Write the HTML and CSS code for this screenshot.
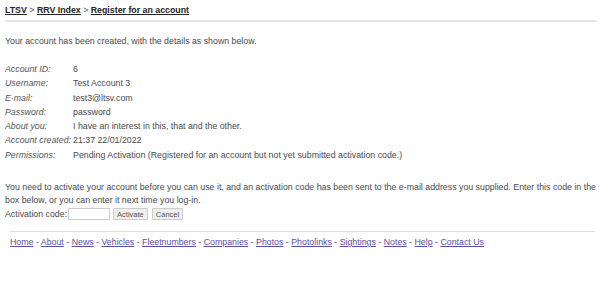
FILE: index.html
```html
<html>
<head>
    <title>Register for an account</title>
    <link rel="stylesheet" href="styles.css">
</head>
<body>
    <div class="header">
        <a href="#">LTSV</a> &gt; <a href="#">RRV Index</a> &gt; <a href="#">Register for an account</a>
    </div>

    <div class="content">
        <p>Your account has been created, with the details as shown below.</p>

        <table class="details">
            <tr><th>Account ID:</th><td>6</td></tr>
            <tr><th>Username:</th><td>Test Account 3</td></tr>
            <tr><th>E-mail:</th><td>test3@ltsv.com</td></tr>
            <tr><th>Password:</th><td>password</td></tr>
            <tr><th>About you:</th><td>I have an interest in this, that and the other.</td></tr>
            <tr><th>Account created:</th><td>21:37 22/01/2022</td></tr>
            <tr><th>Permissions:</th><td>Pending Activation (Registered for an account but not yet submitted activation code.)</td></tr>
        </table>

        <p class="notice">You need to activate your account before you can use it, and an activation code has been sent to the e-mail address you supplied. Enter this code in the box below, or you can enter it next time you log-in.</p>
        <form class="activate">
            <label for="code">Activation code:</label>
            <input type="text" id="code">
            <button type="submit">Activate</button>
            <button type="button">Cancel</button>
        </form>
    </div>

    <div class="footer">
        <a href="#">Home</a> - <a href="#">About</a> - <a href="#">News</a> - <a href="#">Vehicles</a> - <a href="#">Fleetnumbers</a> - <a href="#">Companies</a> - <a href="#">Photos</a> - <a href="#">Photolinks</a> - <a href="#">Sightings</a> - <a href="#">Notes</a> - <a href="#">Help</a> - <a href="#">Contact Us</a>
    </div>
</body>
</html>
```

FILE: styles.css
```css
body {
    margin: 0;
    padding: 0 3px 0 5px;
    font-family: "Liberation Sans", Arial, sans-serif;
    font-size: 8.8px;
    line-height: 11px;
    color: #4a4a4a;
    background: #fff;
}
.header {
    padding: 5px 0 4px;
    border-bottom: 2px solid #e6e6e6;
    font-size: 8.8px;
    color: #555;
}
.header a {
    color: #222;
    font-weight: bold;
}
.content p {
    margin: 14px 0 0;
}
.details {
    border-collapse: collapse;
    margin-top: 15px;
    font-size: 8.8px;
    line-height: 10.3px;
    color: #4a4a4a;
}
.details th {
    font-weight: normal;
    font-style: italic;
    text-align: left;
    color: #555;
    padding: 2px 2px 2px 0;
    width: 66px;
    white-space: nowrap;
}
.details td {
    padding: 2px 0;
}
.content p.notice {
    margin: 19px 0 0;
    line-height: 13px;
}
.activate {
    margin: 0;
    display: flex;
    align-items: center;
    height: 14px;
}
.activate label {
    margin-right: 1px;
}
.activate input {
    width: 42px;
    height: 12px;
    box-sizing: border-box;
    border: 1px solid #ccc;
    margin: 0 3px 0 0;
    padding: 0;
    font-size: 8px;
}
.activate button {
    font-family: "Liberation Sans", Arial, sans-serif;
    font-size: 7.5px;
    height: 12px;
    line-height: 9px;
    color: #555;
    background: #efefef;
    border: 1px solid #ccc;
    border-radius: 1px;
    padding: 0 3px;
    margin-right: 4px;
}
.footer {
    margin: 10px 2px 0 5px;
    padding-top: 5px;
    border-top: 1px solid #ddd;
}
.footer a {
    color: #5a4ea8;
}
```
